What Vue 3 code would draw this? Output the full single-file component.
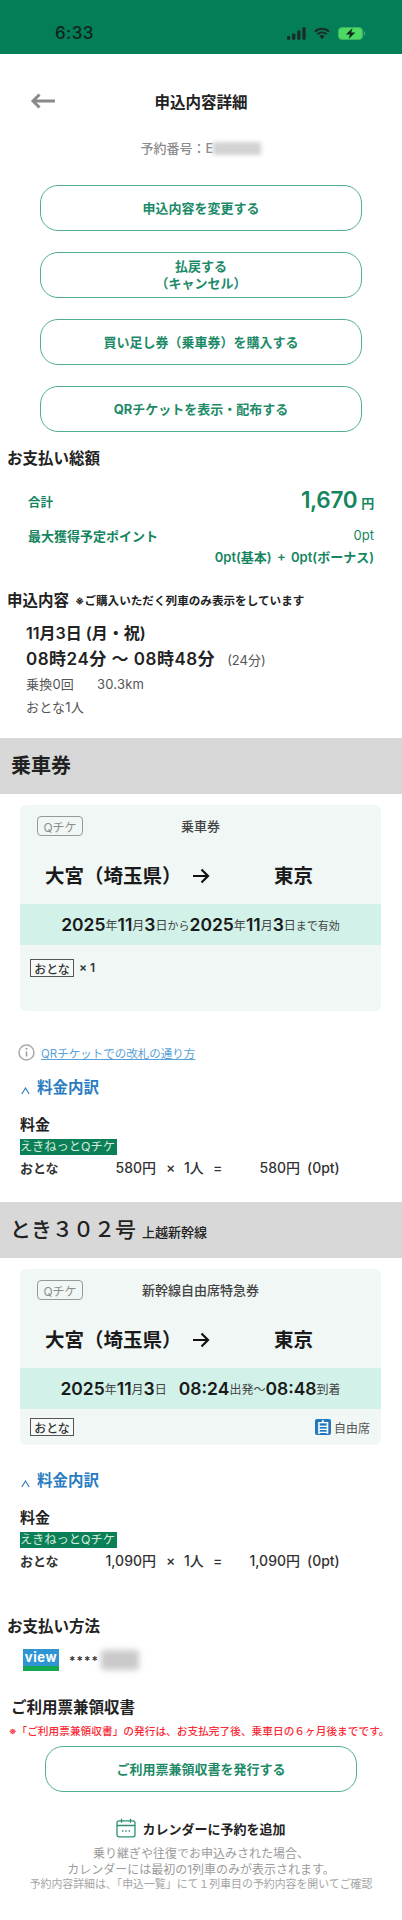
<script setup>
const buttons = [
  ['申込内容を変更する'],
  ['払戻する', '（キャンセル）'],
  ['買い足し券（乗車券）を購入する'],
  ['QRチケットを表示・配布する'],
]
</script>

<template>
  <div class="page">
    <header class="status">
      <span class="time">6:33</span>
      <span class="status-icons">
        <svg width="19" height="13" viewBox="0 0 20 13"><rect x="0" y="9" width="3.4" height="4" rx="1" fill="#1c2b25"/><rect x="5.4" y="6.5" width="3.4" height="6.5" rx="1" fill="#1c2b25"/><rect x="10.8" y="3.4" width="3.4" height="9.6" rx="1" fill="#1c2b25"/><rect x="16.2" y="0" width="3.4" height="13" rx="1" fill="#1c2b25"/></svg>
        <svg width="16" height="13" viewBox="0 0 17 13"><path d="M1 4.6a10.6 10.6 0 0 1 15 0M3.6 7.3a7 7 0 0 1 9.8 0" fill="none" stroke="#1c2b25" stroke-width="2"/><path d="M5.8 9.4a3.8 3.8 0 0 1 5.4 0L8.5 12.6z" fill="#1c2b25"/></svg>
        <svg width="28" height="13" viewBox="0 0 28 13"><rect x="0.5" y="0.5" width="24" height="12" rx="3.5" fill="#4cd964" stroke="#3fb45e"/><rect x="25.6" y="4.2" width="1.6" height="4.6" rx="0.8" fill="#3fa26e"/><path d="M14.6 1 7.8 7.4h4.2l-1.4 4.600 6.800-6.400h-4.200z" fill="#12291e"/></svg>
      </span>
    </header>

    <div class="title-bar">
      <svg class="back" width="26" height="18" viewBox="0 0 26 18"><path d="M25 9H3M9.500 2.500 3 9l6.500 6.500" fill="none" stroke="#8a8a8a" stroke-width="3"/></svg>
      <h1>申込内容詳細</h1>
    </div>
    <p class="reserve">予約番号：E<span class="blur-id"></span></p>

    <div class="buttons">
      <button v-for="(b, i) in buttons" :key="i" class="pill">
        <span v-for="line in b" :key="line">{{ line }}</span>
      </button>
    </div>

    <h2 class="h total-h">お支払い総額</h2>
    <div class="pay">
      <div class="pay-row first"><b>合計</b><span class="amount">1,670<small>円</small></span></div>
      <div class="pay-row second"><b>最大獲得予定ポイント</b><span>0pt</span></div>
      <div class="pay-sub">0pt(基本) + 0pt(ボーナス)</div>
    </div>

    <h2 class="h apply-h">申込内容<small>※ご購入いただく列車のみ表示をしています</small></h2>
    <div class="apply">
      <div class="date">11月3日 (月・祝)</div>
      <div class="times">08時24分 〜 08時48分<small>(24分)</small></div>
      <div class="meta"><span>乗換0回</span><span>30.3km</span></div>
      <div class="meta">おとな1人</div>
    </div>

    <section class="band"><h2>乗車券</h2></section>
    <div class="card">
      <div class="card-top"><span class="qchike">Qチケ</span><span class="kind">乗車券</span></div>
      <div class="route"><span class="from">大宮（埼玉県）</span><svg width="18" height="16" viewBox="0 0 18 16"><path d="M1 8h15M9.500 1.500 16 8l-6.500 6.500" fill="none" stroke="#111" stroke-width="2.200"/></svg><span class="to">東京</span></div>
      <div class="valid"><b>2025</b>年<b>11</b>月<b>3</b>日<i>から</i><b>2025</b>年<b>11</b>月<b>3</b>日<i>まで有効</i></div>
      <div class="card-foot tall"><span class="tag">おとな</span><span class="mult">× 1</span></div>
    </div>

    <div class="info">
      <svg width="17" height="17" viewBox="0 0 17 17"><circle cx="8.500" cy="8.500" r="7.500" fill="none" stroke="#aaa" stroke-width="1.500"/><path d="M8.500 7.500v5" stroke="#999" stroke-width="1.500"/><circle cx="8.500" cy="4.800" r="1" fill="#999"/></svg>
      <a>QRチケットでの改札の通り方</a>
    </div>

    <div class="breakdown">
      <div class="bd-title"><svg width="9" height="8" viewBox="0 0 9 8"><path d="M.8 7 4.500 1 8.200 7" fill="none" stroke="#2a7cc0" stroke-width="1.100"/></svg>料金内訳</div>
      <div class="fee">料金</div>
      <span class="eki">えきねっとQチケ</span>
      <div class="line"><span class="c1">おとな</span><span class="c2">580円</span><span class="c3">×</span><span class="c4">1人</span><span class="c5">=</span><span class="c6">580円</span><span class="c7">(0pt)</span></div>
    </div>

    <section class="band train"><h2>とき３０２号<small>上越新幹線</small></h2></section>
    <div class="card">
      <div class="card-top"><span class="qchike">Qチケ</span><span class="kind">新幹線自由席特急券</span></div>
      <div class="route"><span class="from">大宮（埼玉県）</span><svg width="18" height="16" viewBox="0 0 18 16"><path d="M1 8h15M9.500 1.500 16 8l-6.500 6.500" fill="none" stroke="#111" stroke-width="2.200"/></svg><span class="to">東京</span></div>
      <div class="valid"><b>2025</b>年<b>11</b>月<b>3</b>日<b class="gap">08:24</b>出発〜<b>08:48</b>到着</div>
      <div class="card-foot between">
        <span class="tag">おとな</span>
        <span class="seat"><span class="seat-icon">自</span>自由席</span>
      </div>
    </div>

    <div class="breakdown second-bd">
      <div class="bd-title"><svg width="9" height="8" viewBox="0 0 9 8"><path d="M.8 7 4.500 1 8.200 7" fill="none" stroke="#2a7cc0" stroke-width="1.100"/></svg>料金内訳</div>
      <div class="fee">料金</div>
      <span class="eki">えきねっとQチケ</span>
      <div class="line"><span class="c1">おとな</span><span class="c2">1,090円</span><span class="c3">×</span><span class="c4">1人</span><span class="c5">=</span><span class="c6">1,090円</span><span class="c7">(0pt)</span></div>
    </div>

    <h2 class="h method-h">お支払い方法</h2>
    <div class="method">
      <span class="view"><span>view</span></span>
      <span class="stars">****</span><span class="blur-card"></span>
    </div>

    <h2 class="h receipt-h">ご利用票兼領収書</h2>
    <p class="warn">※「ご利用票兼領収書」の発行は、お支払完了後、乗車日の６ヶ月後までです。</p>
    <button class="pill receipt-btn"><span>ご利用票兼領収書を発行する</span></button>

    <div class="cal">
      <svg width="20" height="20" viewBox="0 0 20 20"><rect x="1" y="2.800" width="18" height="16" rx="2" fill="none" stroke="#2e8f72" stroke-width="1.300"/><path d="M1 7.500h18M5.500 .8v4M14.500 .8v4" stroke="#2e8f72" stroke-width="1.300"/><path d="M6 13h1.400M9.300 13h1.400M12.600 13H14" stroke="#2e8f72" stroke-width="1.500"/></svg>
      <span>カレンダーに予約を追加</span>
    </div>
    <p class="note">乗り継ぎや往復でお申込みされた場合、<br>カレンダーには最初の1列車のみが表示されます。</p>
    <p class="note small">予約内容詳細は、「申込一覧」にて１列車目の予約内容を開いてご確認</p>
  </div>
</template>

<style scoped>
.page {
  width: 402px;
  height: 1920px;
  overflow: hidden;
  background: #fff;
  color: #1c1c1c;
  font-family: Inter, "Noto Sans CJK JP", sans-serif;
}
h1, h2, p { margin: 0; }
.status {
  height: 54px;
  background: #047d59;
  display: flex;
  align-items: center;
  justify-content: space-between;
  padding: 12px 36px 0 55px;
  box-sizing: border-box;
}
.time { font-size: 17px; font-weight: 500; color: #10241c; letter-spacing: .4px; }
.status-icons { display: flex; align-items: center; gap: 8px; }
.title-bar { position: relative; height: 26px; margin-top: 34px; display: flex; align-items: center; justify-content: center; }
.back { position: absolute; left: 30px; top: 4px; }
h1 { font-size: 15.5px; font-weight: 700; color: #222; }
.reserve { margin-top: 23px; height: 22px; line-height: 22px; font-size: 13px; color: #8c8c8c; font-weight: 500; display: flex; justify-content: center; align-items: center; }
.blur-id { width: 48px; height: 13px; background: #d2d2d2; filter: blur(2px); display: inline-block; }
.buttons { display: flex; flex-direction: column; gap: 21px; padding: 0 40px; margin-top: 26px; }
.pill {
  height: 46px;
  border: 1.5px solid #52ad91;
  border-radius: 18px;
  background: #fff;
  display: flex;
  flex-direction: column;
  align-items: center;
  justify-content: center;
  color: #1d8a68;
  font: 700 13px/17px Inter, "Noto Sans CJK JP", sans-serif;
  padding: 0;
}
.h { font-size: 15.5px; font-weight: 700; padding-left: 7px; color: #222; line-height: 22px; }
.total-h { margin-top: 16px; }
.pay { padding: 0 28px; color: #15855f; font-size: 13px; }
.pay-row { display: flex; justify-content: space-between; align-items: center; }
.pay-row b { font-weight: 700; }
.first { margin-top: 12px; height: 38px; }
.first b { font-size: 12.5px; }
.amount { font-size: 22.5px; font-weight: 600; line-height: 30px; letter-spacing: -.3px; }
.amount small { font-size: 13px; margin-left: 4px; font-weight: 600; }
.second { margin-top: 4px; height: 22px; }
.pay-sub { text-align: right; font-size: 13px; font-weight: 600; line-height: 22px; word-spacing: 2px; }
.apply-h { margin-top: 22px; display: flex; align-items: center; gap: 6px; }
.apply-h small { font-size: 11.6px; font-weight: 700; color: #222; }
.apply { padding-left: 26px; }
.date { font-size: 16px; font-weight: 600; line-height: 26px; margin-top: 8px; color: #222; }
.times { font-size: 17px; font-weight: 600; line-height: 26px; color: #222; letter-spacing: .5px; }
.times small { font-size: 13px; font-weight: 400; margin-left: 12px; color: #555; letter-spacing: 0; }
.meta { font-size: 13px; color: #555; line-height: 23px; display: flex; gap: 23px; letter-spacing: .2px; }
.band { background: #d8d8d8; height: 56px; display: flex; align-items: center; padding-left: 11px; margin-top: 19px; }
.band h2 { font-size: 20px; font-weight: 700; color: #222; line-height: 28px; }
.band.train { margin-top: 24px; padding-left: 10px; }
.band.train h2 { font-size: 21px; font-weight: 500; display: flex; align-items: flex-end; }
.band.train small { font-size: 13px; font-weight: 500; margin-left: 6px; line-height: 24px; }
.card { margin: 11px 21px 0 20px; background: #f0f7f5; border-radius: 6px; overflow: hidden; }
.card-top { position: relative; height: 38px; display: flex; align-items: center; justify-content: center; }
.qchike { position: absolute; left: 17px; top: 11px; width: 46px; height: 20px; box-sizing: border-box; border: 1px solid #999; border-radius: 4px; display: flex; align-items: center; justify-content: center; font-size: 12px; color: #8d8d8d; }
.kind { font-size: 13px; font-weight: 500; color: #444; margin-top: 3px; }
.route { height: 61px; position: relative; }
.route svg { position: absolute; left: 172px; top: 25px; }
.from { position: absolute; left: 25px; top: 18px; font-size: 19.5px; font-weight: 700; line-height: 30px; color: #1a1a1a; }
.to { position: absolute; left: 254px; top: 18px; font-size: 19.5px; font-weight: 700; line-height: 30px; color: #1a1a1a; }
.valid { height: 41px; background: #d2f1e8; display: flex; align-items: center; justify-content: center; font-size: 12px; color: #444; }
.valid b { font-size: 17.5px; font-weight: 600; color: #1a1a1a; }
.valid i { font-style: normal; font-size: 11px; }
.valid .gap { margin-left: 12px; }
.card-foot { display: flex; align-items: center; padding: 14px 10px 0; }
.card-foot.tall { height: 66px; align-items: flex-start; box-sizing: border-box; }
.card-foot.between { justify-content: space-between; height: 36px; box-sizing: border-box; padding: 9px 11px 9px 10px; }
.tag { width: 44px; height: 18px; box-sizing: border-box; border: 1.5px solid #555; font-size: 12px; display: flex; align-items: center; justify-content: center; font-weight: 500; color: #333; background: #f6faf8; }
.mult { font-size: 12px; font-weight: 600; margin-left: 5px; line-height: 18px; color: #333; }
.seat { display: flex; align-items: center; gap: 3px; font-size: 12px; color: #555; }
.seat-icon { width: 16px; height: 16px; background: #2276bd; color: #fff; font-size: 14px; line-height: 16px; text-align: center; border-radius: 2px; font-weight: 500; }
.info { display: flex; align-items: center; gap: 6px; margin-top: 33px; padding-left: 18px; height: 17px; }
.info a { font-size: 11.5px; color: #5a9fd6; text-decoration: underline; }
.breakdown { padding-left: 20px; margin-top: 15px; }
.second-bd { margin-top: 24px; }
.bd-title { display: flex; align-items: center; gap: 7px; color: #2a7cc0; font-size: 15.5px; font-weight: 700; line-height: 24px; padding-left: 1px; }
.bd-title svg { margin-top: 5px; }
.fee { font-size: 15px; font-weight: 600; line-height: 22px; margin-top: 14px; color: #222; }
.eki { display: block; width: 97px; height: 16px; background: #0b7f56; color: #d5eadf; font-size: 12.3px; line-height: 16px; white-space: nowrap; overflow: hidden; margin-top: 3px; }
.line { position: relative; height: 20px; margin-top: 3px; font-size: 14px; font-weight: 500; color: #333; line-height: 20px; }
.line span { position: absolute; top: 0; white-space: nowrap; }
.line .c1 { left: 0; font-size: 13px; font-weight: 600; }
.c2 { right: 246px; }
.c3 { left: 146px; }
.c4 { left: 164px; }
.c5 { left: 193px; }
.c6 { right: 102px; }
.c7 { left: 287px; }
.method-h { margin-top: 45px; }
.method { display: flex; align-items: center; padding-left: 23px; margin-top: 10px; height: 24px; }
.view { width: 36px; height: 22px; background: linear-gradient(#2f94d2 0 78%, #15a852 78%); color: #fff; font-size: 13px; font-weight: 700; display: flex; justify-content: center; line-height: 17px; letter-spacing: .6px; }
.stars { margin-left: 10px; font-size: 12px; font-weight: 600; letter-spacing: 1px; color: #333; }
.blur-card { width: 38px; height: 20px; background: #c9c9c9; filter: blur(3px); margin-left: 2px; }
.receipt-h { margin-top: 25px; padding-left: 11px; font-size: 15.5px; }
.warn { color: #fa2c38; font-size: 10.7px; font-weight: 500; line-height: 16px; padding-left: 9px; margin-top: 5px; white-space: nowrap; }
.receipt-btn { width: 312px; margin: 6px 0 0 45px; }
.cal { display: flex; align-items: center; justify-content: center; gap: 6px; margin-top: 26px; font-size: 13px; font-weight: 700; color: #222; height: 20px; }
.note { text-align: center; color: #9b9b9b; font-size: 12px; line-height: 15.5px; margin-top: 8px; white-space: nowrap; }
.note.small { font-size: 10.9px; margin-top: 0; line-height: 15px; color: #a5a5a5; }
</style>
